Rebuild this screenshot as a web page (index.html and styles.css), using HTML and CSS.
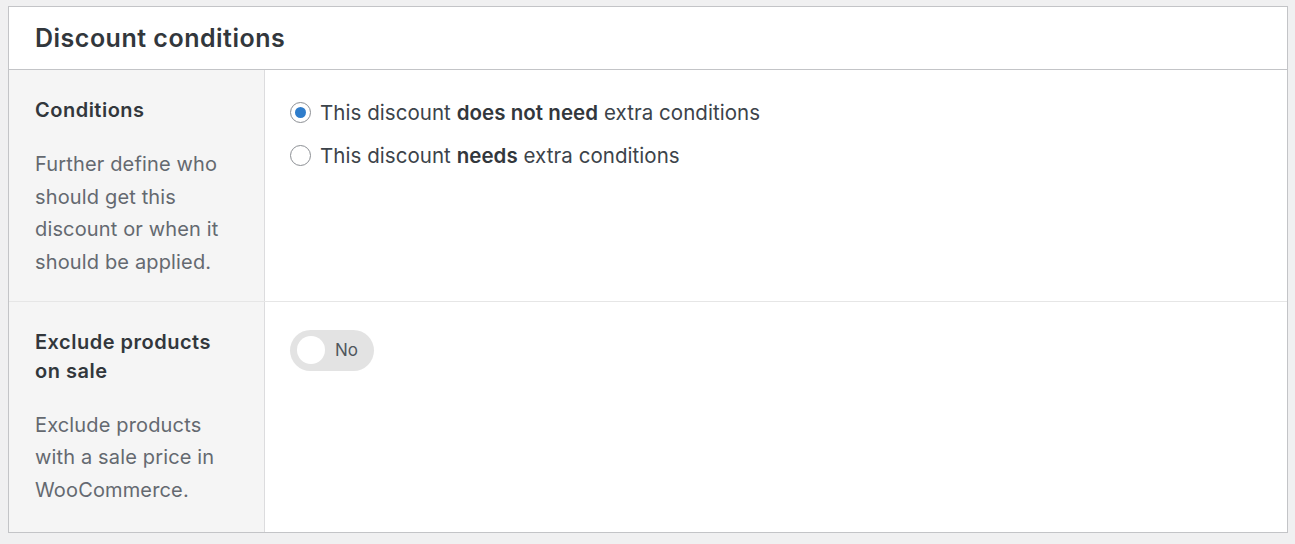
FILE: index.html
```html
<!DOCTYPE html>
<html>
<head>
<meta charset="utf-8">
<link rel="stylesheet" href="styles.css">
</head>
<body>
<div class="panel">
  <div class="panel-head"><h2 class="panel-title">Discount conditions</h2></div>
  <div class="row">
    <div class="label-cell">
      <div class="label">Conditions</div>
      <p class="desc">Further define who should get this discount or when it should be applied.</p>
    </div>
    <div class="field-cell">
      <label class="radio-line"><span class="radio checked"></span><span>This discount <b>does not need</b> extra conditions</span></label>
      <label class="radio-line"><span class="radio"></span><span>This discount <b>needs</b> extra conditions</span></label>
    </div>
  </div>
  <div class="row">
    <div class="label-cell">
      <div class="label">Exclude products on sale</div>
      <p class="desc">Exclude products with a sale price in WooCommerce.</p>
    </div>
    <div class="field-cell">
      <div class="toggle"><span class="knob"></span><span class="toggle-text">No</span></div>
    </div>
  </div>
</div>
</body>
</html>
```
FILE: styles.css
```css
html, body { margin: 0; padding: 0; }
body {
  background: #f0f0f1;
  font-family: Inter, "Noto Sans", "Liberation Sans", sans-serif;
  color: #3c434a;
  padding: 6px 7px 0 8px;
}
.panel {
  background: #fff;
  border: 1px solid #c3c4c7;
  width: 1278px;
  height: 525px;
  display: flex;
  flex-direction: column;
}
.panel-head {
  height: 62px;
  border-bottom: 1px solid #c3c4c7;
  display: flex;
  align-items: center;
  padding-left: 26px;
}
.panel-title {
  margin: 0;
  font-size: 25px;
  font-weight: 600;
  color: #32373c;
  letter-spacing: 0.5px;
}
.row {
  display: flex;
  flex: 1;
}
.row + .row { border-top: 1px solid #e6e6e6; }
.row:first-of-type { flex: 0 0 231px; }
.label-cell {
  width: 196px;
  background: #f5f5f5;
  border-right: 1px solid #dcdcde;
  padding: 26px 33px 0 26px;
}
.label {
  font-size: 20px;
  font-weight: 600;
  line-height: 29px;
  color: #32373c;
  letter-spacing: 0.5px;
}
.desc {
  margin: 23px 0 0;
  font-size: 20px;
  line-height: 32.5px;
  color: #646970;
  letter-spacing: 0.15px;
}
.field-cell {
  flex: 1;
  padding: 28px 0 0 25px;
}
.radio-line {
  display: flex;
  align-items: center;
  gap: 9px;
  font-size: 20.5px;
  letter-spacing: 0.05px;
  height: 29px;
  margin-bottom: 14px;
  color: #3c434a;
}
.radio-line b { font-weight: 600; color: #32373c; }
.radio {
  width: 21px;
  height: 21px;
  flex: none;
  border: 1px solid #8c8f94;
  border-radius: 50%;
  box-sizing: border-box;
  display: flex;
  align-items: center;
  justify-content: center;
  background: #fff;
}
.radio.checked::after {
  content: "";
  width: 11px;
  height: 11px;
  border-radius: 50%;
  background: #2f7dcb;
}
.toggle {
  width: 84px;
  height: 41px;
  border-radius: 21px;
  background: #e3e3e3;
  display: flex;
  align-items: center;
  box-sizing: border-box;
  padding-left: 7px;
}
.knob {
  width: 28px;
  height: 28px;
  border-radius: 50%;
  background: #fff;
}
.toggle-text {
  margin-left: 10px;
  font-size: 17px;
  color: #50575e;
}
```
